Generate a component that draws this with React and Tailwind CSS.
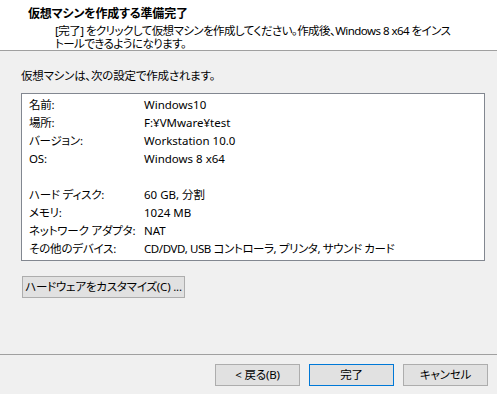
const rows = [
  ['名前:', 'Windows10'],
  ['場所:', 'F:¥VMware¥test'],
  ['バージョン:', 'Workstation 10.0'],
  ['OS:', 'Windows 8 x64'],
  null,
  ['ハード ディスク:', '60 GB, 分割'],
  ['メモリ:', '1024 MB'],
  ['ネットワーク アダプタ:', 'NAT'],
  ['その他のデバイス:', 'CD/DVD, USB コントローラ, プリンタ, サウンド カード', true],
]

function WinButton({ children, primary, className = '' }) {
  return (
    <button
      className={`box-border h-[22px] border bg-[#e1e1e1] text-[11.5px] leading-none whitespace-nowrap text-black ${
        primary ? 'border-[#0078d7]' : 'border-[#adadad]'
      } ${className}`}
    >
      {children}
    </button>
  )
}

export default function App() {
  return (
    <div className="flex h-[394px] w-[497px] flex-col overflow-hidden bg-[#f0f0f0] font-['Noto_Sans','Noto_Sans_CJK_JP',sans-serif] text-[11.5px] tracking-[-0.2px] text-black [font-feature-settings:'palt']">
      <header className="box-border h-[51px] border-b border-[#a0a0a0] bg-white pt-[7px]">
        <h1 className="pl-[28px] text-[12px] leading-[14px] font-bold">仮想マシンを作成する準備完了</h1>
        <p className="mt-[3px] pl-[55px] leading-[13px] tracking-[-0.55px] whitespace-nowrap">
          [完了] をクリックして仮想マシンを作成してください。作成後、Windows 8 x64 をインス
          <br />
          トールできるようになります。
        </p>
      </header>

      <main className="flex flex-col pt-[16px] pl-[21px]">
        <p className="leading-[18px]">仮想マシンは、次の設定で作成されます。</p>

        <div className="mt-[8px] box-border w-[464px] border border-[#828790] bg-white pt-[2px] pb-[2px]">
          {rows.map((row, i) =>
            row ? (
              <div key={i} className="flex h-[18px] items-center whitespace-nowrap">
                <span className="w-[122px] shrink-0 pl-[7px]">{row[0]}</span>
                <span className={row[2] ? 'tracking-[-0.4px]' : 'tracking-normal'}>{row[1]}</span>
              </div>
            ) : (
              <div key={i} className="h-[18px]" />
            )
          )}
        </div>

        <WinButton className="mt-[15px] ml-[1px] w-[163px]">ハードウェアをカスタマイズ(C) ...</WinButton>
      </main>

      <div className="flex-1" />

      <footer className="box-border flex h-[40px] justify-end gap-[9px] border-t border-[#a0a0a0] pt-[9px] pr-[9px]">
        <WinButton className="w-[85px]">&lt; 戻る(B)</WinButton>
        <WinButton primary className="w-[85px]">完了</WinButton>
        <WinButton className="w-[85px]">キャンセル</WinButton>
      </footer>
    </div>
  )
}
